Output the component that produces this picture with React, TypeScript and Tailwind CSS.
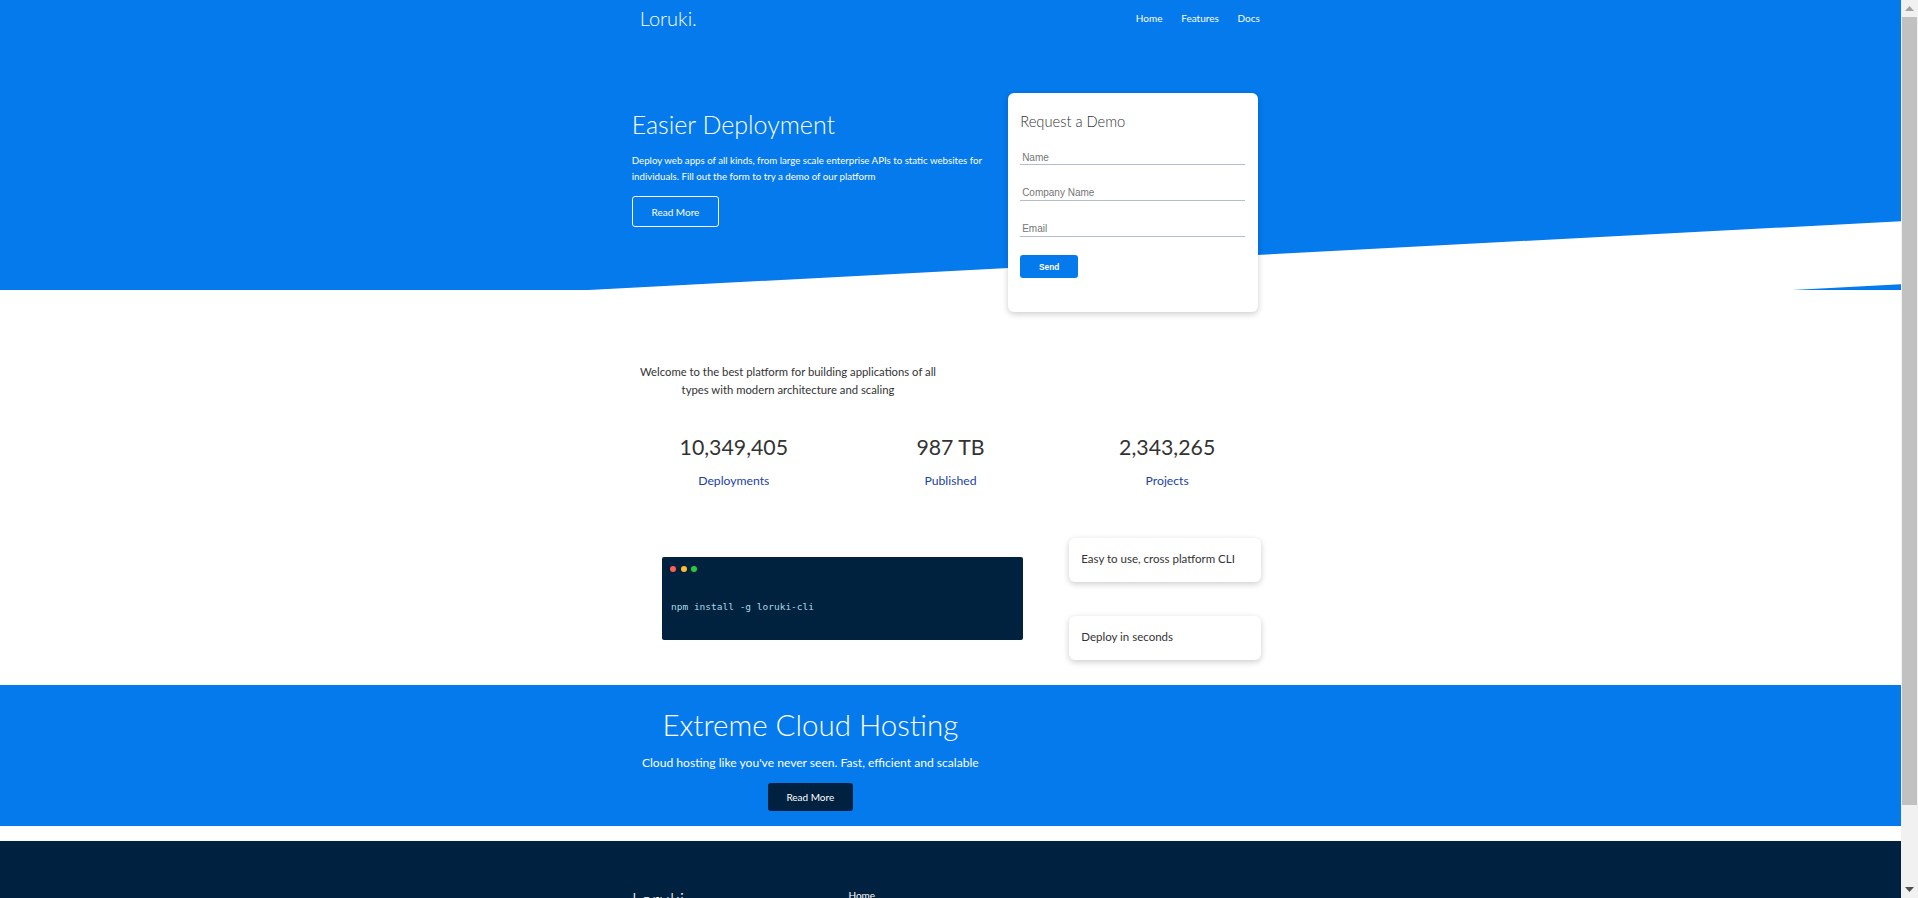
import { FaGithub, FaFacebook, FaInstagram, FaTwitter } from "react-icons/fa"

const Navbar = () => {
  return (
    <div className="bg-[#047aed] text-white h-[40px]">
      <div className="max-w-[687.5px] mx-auto px-[25px] h-full flex items-center justify-between pb-[4px]">
        <h1 className="text-[20px] font-light leading-[1.2] pl-[8px]">Loruki.</h1>
        <ul className="flex">
          <li><a className="px-[6.25px] mx-[3.125px]" href="#">Home</a></li>
          <li><a className="px-[6.25px] mx-[3.125px]" href="#">Features</a></li>
          <li><a className="px-[6.25px] mx-[3.125px]" href="#">Docs</a></li>
        </ul>
      </div>
    </div>
  )
}

const inputCls =
  "w-full border-0 border-b border-[#b4becb] p-[1.875px] text-[10px] leading-[normal] font-['Liberation_Sans',Arial,sans-serif] text-[#333] placeholder:text-[#757575] outline-none"

const Hero = () => {
  return (
    <section className="relative bg-[#047aed] text-white h-[250px]">
      <div className="max-w-[687.5px] mx-auto px-[25px] h-full flex">
        <div className="w-[365px] shrink-0 self-center">
          <h1 className="text-[25px] font-light leading-[1.2] my-[6.25px]">Easier Deployment</h1>
          <p className="my-[12.5px] text-[9.7px] leading-[16px]">
            Deploy web apps of all kinds, from large scale enterprise APIs to static websites for
            individuals. Fill out the form to try a demo of our platform
          </p>
          <a href="#" className="block w-fit border border-white rounded-[3px] px-[18.75px] py-[6.25px]">
            Read More
          </a>
        </div>

        <div className="relative z-10 self-start ml-[11px] mt-[53px] w-[250px] h-[219px] shrink-0 bg-white text-[#333] rounded-[6px] shadow-[0_2px_6px_rgba(0,0,0,0.2)] p-[12.5px]">
          <h2 className="text-[14.7px] font-light leading-[18px] my-[6.25px]">Request a Demo</h2>
          <form>
            <div className="my-[18.75px]">
              <input type="text" placeholder="Name" className={inputCls} />
            </div>
            <div className="my-[18.75px]">
              <input type="text" placeholder="Company Name" className={inputCls} />
            </div>
            <div className="my-[18.75px]">
              <input type="email" placeholder="Email" className={inputCls} />
            </div>
            <button
              type="button"
              className="block bg-[#047aed] text-white rounded-[3px] px-[18.75px] py-[6.25px] text-[8.33px] leading-[normal] font-bold font-['Liberation_Sans',Arial,sans-serif]"
            >
              Send
            </button>
          </form>
        </div>
      </div>
      {/* skewed white edge */}
      <div className="absolute left-0 right-0 -bottom-[43.75px] h-[62.5px] bg-white -skew-y-3" />
    </section>
  )
}

const stats = [
  { num: "10,349,405", label: "Deployments" },
  { num: "987 TB", label: "Published" },
  { num: "2,343,265", label: "Projects" },
]

const Stats = () => {
  return (
    <section className="pt-[62.5px] pb-[35.5px]">
      <div className="max-w-[687.5px] mx-auto px-[25px]">
        <h3 className="max-w-[312.5px] text-center my-[10px] text-[11.3px] font-normal leading-[18.7px]">
          Welcome to the best platform for building applications of all types with modern architecture and scaling
        </h3>
        <div className="grid grid-cols-3 gap-[12.5px] text-center mt-[30px]">
          {stats.map((s) => (
            <div key={s.label}>
              <h3 className="text-[21.3px] font-normal leading-[35px]">{s.num}</h3>
              <p className="text-[12.2px] leading-[20px] mt-[6.5px] text-[#1c3fa8]">{s.label}</p>
            </div>
          ))}
        </div>
      </div>
    </section>
  )
}

const Cli = () => {
  return (
    <section>
      <div className="max-w-[687.5px] mx-auto px-[25px] h-[143.5px] flex">
        <div className="w-[421.5px] flex items-center justify-center">
          <div className="w-[361px] h-[83px] bg-[#00223f] rounded-[2px] px-[8px] pt-[9px]">
            <div className="flex gap-[4.7px]">
              <span className="w-[6px] h-[6px] rounded-full bg-[#ff5f56]" />
              <span className="w-[6px] h-[6px] rounded-full bg-[#ffbd2e]" />
              <span className="w-[6px] h-[6px] rounded-full bg-[#27c93f]" />
            </div>
            <p className="mt-[29px] ml-[1px] text-[9.5px] leading-[12px] text-[#a9d8e6] font-['DejaVu_Sans_Mono',monospace]">
              npm install -g loruki-cli
            </p>
          </div>
        </div>
        <div className="ml-[12.5px] flex-1 grid grid-rows-2 gap-[12.5px] items-center">
          <div className="ml-[3px] w-[192px] bg-white rounded-[6px] shadow-[0_2px_6px_rgba(0,0,0,0.2)] p-[12.5px]">
            <h3 className="text-[11.5px] font-normal leading-[18.7px]">Easy to use, cross platform CLI</h3>
          </div>
          <div className="ml-[3px] w-[192px] bg-white rounded-[6px] shadow-[0_2px_6px_rgba(0,0,0,0.2)] p-[12.5px]">
            <h3 className="text-[11.5px] font-normal leading-[18.7px]">Deploy in seconds</h3>
          </div>
        </div>
      </div>
    </section>
  )
}

const Cloud = () => {
  return (
    <section className="bg-[#047aed] text-white mt-[15px] mb-[15px] py-[15px]">
      <div className="max-w-[687.5px] mx-auto px-[25px] grid grid-cols-[4fr_3fr] gap-[12.5px] items-center">
        <div className="text-center">
          <h2 className="text-[29.5px] font-light leading-[36px] my-[6.25px]">Extreme Cloud Hosting</h2>
          <p className="text-[12.1px] leading-[20px] my-[10px]">
            Cloud hosting like you've never seen. Fast, efficient and scalable
          </p>
          <a href="#" className="block w-fit mx-auto bg-[#002240] rounded-[3px] px-[18.75px] py-[6.25px]">
            Read More
          </a>
        </div>
        <div />
      </div>
    </section>
  )
}

const Footer = () => {
  return (
    <footer className="bg-[#002240] text-white py-[40px]">
      <div className="max-w-[687.5px] mx-auto px-[25px] grid grid-cols-3 gap-[12.5px] items-center">
        <div>
          <h1 className="text-[20px] font-light leading-[1.2] my-[6.25px]">Loruki</h1>
          <p className="my-[6.25px]">Copyright &copy; 2020</p>
        </div>
        <nav>
          <ul>
            <li><a href="#">Home</a></li>
            <li><a href="#">Features</a></li>
            <li><a href="#">Docs</a></li>
          </ul>
        </nav>
        <div className="flex gap-[12px] text-[12px]">
          <FaGithub />
          <FaFacebook />
          <FaInstagram />
          <FaTwitter />
        </div>
      </div>
    </footer>
  )
}

// browser scrollbar as seen in the screenshot
const Scrollbar = () => {
  return (
    <div className="sticky top-0 w-[17px] h-[898px] shrink-0 bg-[#f1f1f1] flex flex-col items-center">
      <div className="h-[17px] w-full flex items-center justify-center">
        <svg width="9" height="5" viewBox="0 0 9 5"><path d="M0 5 L4.5 0 L9 5 Z" fill="#a3a3a3" /></svg>
      </div>
      <div className="w-[15px] h-[788px] bg-[#c1c1c1]" />
      <div className="flex-1" />
      <div className="h-[17px] w-full flex items-center justify-center">
        <svg width="9" height="5" viewBox="0 0 9 5"><path d="M0 0 L9 0 L4.5 5 Z" fill="#505050" /></svg>
      </div>
    </div>
  )
}

export default function App() {
  return (
    <div className="flex items-start font-['Lato',sans-serif] text-[#333] text-[10px] leading-[1.6] bg-white">
      <main className="flex-1 min-w-0">
        <Navbar />
        <Hero />
        <Stats />
        <Cli />
        <Cloud />
        <Footer />
      </main>
      <Scrollbar />
    </div>
  )
}
